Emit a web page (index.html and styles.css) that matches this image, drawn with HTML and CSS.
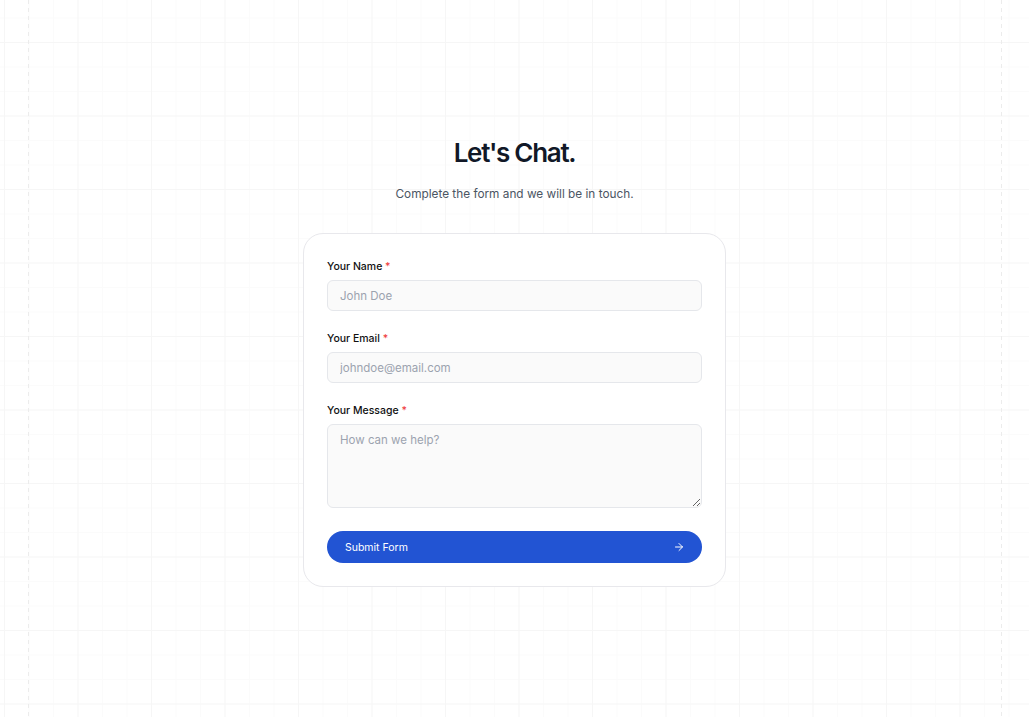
FILE: index.html
```html
<!DOCTYPE html>
<html lang="en">
<head>
<meta charset="utf-8">
<title>Let's Chat</title>
<link rel="stylesheet" href="styles.css">
</head>
<body>
<main class="page">
  <h1 class="title">Let's Chat.</h1>
  <p class="subtitle">Complete the form and we will be in touch.</p>
  <form class="card">
    <div class="field">
      <label class="label" for="name">Your Name <span class="req">*</span></label>
      <input class="input" id="name" type="text" placeholder="John Doe">
    </div>
    <div class="field">
      <label class="label" for="email">Your Email <span class="req">*</span></label>
      <input class="input" id="email" type="email" placeholder="johndoe@email.com">
    </div>
    <div class="field">
      <label class="label" for="msg">Your Message <span class="req">*</span></label>
      <textarea class="input textarea" id="msg" placeholder="How can we help?"></textarea>
    </div>
    <button class="submit" type="button">
      <span>Submit Form</span>
      <svg class="arrow" viewBox="0 0 24 24" width="12" height="12" fill="none" stroke="currentColor" stroke-width="2" stroke-linecap="round" stroke-linejoin="round"><path d="M5 12h14"/><path d="m12 5 7 7-7 7"/></svg>
    </button>
  </form>
</main>
</body>
</html>
```
FILE: styles.css
```css
* { box-sizing: border-box; }
html, body { margin: 0; padding: 0; }
body {
  min-height: 100vh;
  font-family: Inter, "Liberation Sans", sans-serif;
  color: #111827;
  background-color: #ffffff;
  background-image:
    repeating-linear-gradient(to bottom, #ececec 0 4px, transparent 4px 8px),
    repeating-linear-gradient(to bottom, #ececec 0 4px, transparent 4px 8px),
    linear-gradient(to right, #f6f6f6 1px, transparent 1px),
    linear-gradient(to bottom, #f6f6f6 1px, transparent 1px),
    linear-gradient(to right, #fbfbfb 1px, transparent 1px),
    linear-gradient(to bottom, #fbfbfb 1px, transparent 1px);
  background-size:
    1px 100%,
    1px 100%,
    73.5px 73.5px,
    73.5px 73.5px,
    24.5px 24.5px,
    24.5px 24.5px;
  background-position:
    28px 0,
    1001px 0,
    4px 42px,
    4px 42px,
    4px 42px,
    4px 42px;
  background-repeat:
    repeat-y,
    repeat-y,
    repeat,
    repeat,
    repeat,
    repeat;
}
.page {
  display: flex;
  flex-direction: column;
  align-items: center;
  padding-top: 136px;
}
.title {
  margin: 0;
  font-size: 26px;
  line-height: 34px;
  font-weight: 600;
  letter-spacing: -0.05em;
  color: #111827;
}
.subtitle {
  margin: 14px 0 0;
  font-size: 11.8px;
  line-height: 20px;
  color: #4b5563;
}
.card {
  margin-top: 29px;
  width: 423px;
  background: #ffffff;
  border: 1px solid #e8e8ec;
  border-radius: 20px;
  padding: 24px 23px 23px;
  display: flex;
  flex-direction: column;
  gap: 19px;
}
.field {
  display: flex;
  flex-direction: column;
  gap: 5px;
}
.label {
  padding-top: 1px;
  font-size: 10.5px;
  line-height: 16px;
  font-weight: 500;
  color: #111111;
}
.req { color: #ef4444; }
.input {
  width: 100%;
  height: 31px;
  padding: 0 12px;
  font-family: Inter, "Liberation Sans", sans-serif;
  font-size: 11.5px;
  color: #111827;
  background: #fafafa;
  border: 1px solid #e5e7eb;
  border-radius: 6px;
  outline: none;
}
.input::placeholder { color: #9ca3af; }
.textarea {
  height: 84px;
  padding: 7px 12px;
  line-height: 16px;
  resize: vertical;
}
.submit {
  margin-top: 4px;
  height: 32px;
  width: 100%;
  display: flex;
  align-items: center;
  justify-content: space-between;
  padding: 0 17px 0 18px;
  border: none;
  border-radius: 999px;
  background: #2254d3;
  color: #ffffff;
  font-family: Inter, "Liberation Sans", sans-serif;
  font-size: 10.5px;
  font-weight: 400;
  cursor: pointer;
}
.arrow { display: block; }
```
